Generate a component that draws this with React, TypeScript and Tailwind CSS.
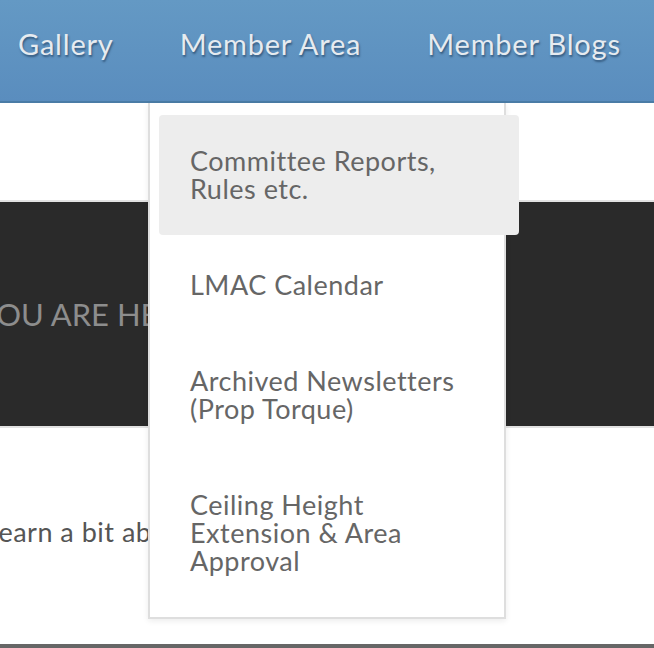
import React from 'react';

const navItems = ['Gallery', 'Member Area', 'Member Blogs'];

const menuItems = [
  { label: 'Committee Reports,\nRules etc.', active: true },
  { label: 'LMAC Calendar', active: false },
  { label: 'Archived Newsletters\n(Prop Torque)', active: false },
  { label: 'Ceiling Height\nExtension & Area\nApproval', active: false },
];

const App: React.FC = () => {
  return (
    <div className="relative w-full h-[648px] overflow-hidden bg-white font-['Lato','Liberation_Sans',sans-serif]">
      <header className="h-[103px] bg-gradient-to-b from-[#6499c4] to-[#5a8dbe] border-b-2 border-[#4a7ca6]">
        <nav className="flex items-center h-full pl-[18px] gap-[66px] pb-[14px]">
          {navItems.map((item) => (
            <span
              key={item}
              className="text-[29px] tracking-[0.8px] text-[#e6ebf0] whitespace-nowrap [text-shadow:1px_2px_2px_rgba(20,45,75,0.55)]"
            >
              {item}
            </span>
          ))}
        </nav>
      </header>

      <div className="h-[97px]" />

      <section className="h-[228px] bg-[#2a2a2a] border-y-2 border-[#e2e2e2] flex items-center">
        <h2 className="ml-[-22px] text-[31px] text-[#8d8d8d] whitespace-nowrap">YOU ARE HERE</h2>
      </section>

      <div className="h-[216px] flex items-center pb-[8px]">
        <p className="ml-[-15px] text-[27px] tracking-[0.5px] text-[#555] whitespace-nowrap">Learn a bit about our club</p>
      </div>

      <div className="h-[10px] bg-[#666]" />

      {/* dropdown under Member Area */}
      <div className="absolute left-[148px] top-[103px] w-[358px] bg-white border-2 border-t-0 border-[#dedede] shadow-[0_2px_6px_rgba(0,0,0,0.08)] pt-[12px] pb-[10px] flex flex-col gap-[4px]">
        {menuItems.map((m) => (
          <div
            key={m.label}
            className={`ml-[9px] w-[360px] rounded-[4px] py-[32px] pl-[31px] pr-4 text-[27px] tracking-[0.5px] leading-[28px] text-[#666] whitespace-pre-line ${
              m.active ? 'bg-[#ededed]' : ''
            }`}
          >
            {m.label}
          </div>
        ))}
      </div>
    </div>
  );
};

export default App;
